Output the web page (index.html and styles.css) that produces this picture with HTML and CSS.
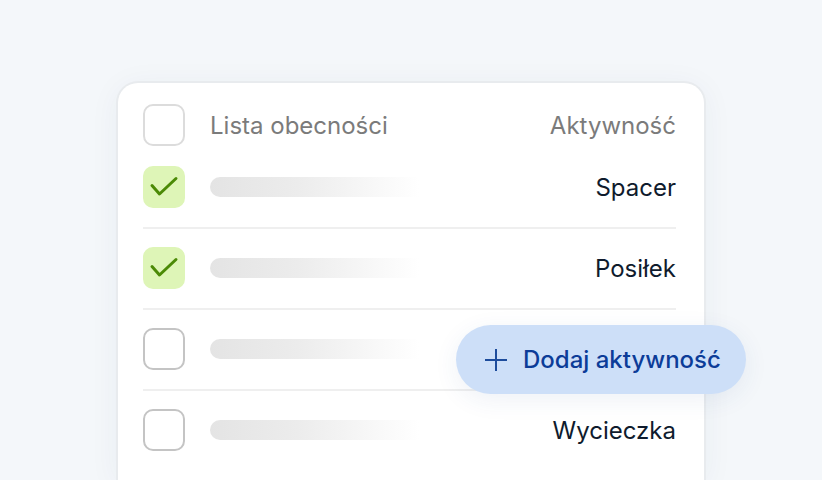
FILE: index.html
```html
<!DOCTYPE html>
<html lang="pl">
<head>
<meta charset="utf-8">
<link rel="stylesheet" href="styles.css">
</head>
<body>
<div class="stage">
  <div class="card">
    <div class="head">
      <span class="box box-light"></span>
      <span class="title">Lista obecności</span>
      <span class="act act-head">Aktywność</span>
    </div>
    <div class="row">
      <span class="box box-on"><svg viewBox="0 0 42 42" width="42" height="42"><path d="M9 19.5 L16.5 28 L33 12.5" fill="none" stroke="#4b8a06" stroke-width="3" stroke-linecap="round" stroke-linejoin="round"/></svg></span>
      <span class="skel"></span>
      <span class="act">Spacer</span>
    </div>
    <div class="row">
      <span class="box box-on"><svg viewBox="0 0 42 42" width="42" height="42"><path d="M9 19.5 L16.5 28 L33 12.5" fill="none" stroke="#4b8a06" stroke-width="3" stroke-linecap="round" stroke-linejoin="round"/></svg></span>
      <span class="skel"></span>
      <span class="act">Posiłek</span>
    </div>
    <div class="row">
      <span class="box"></span>
      <span class="skel"></span>
      <span class="act"></span>
    </div>
    <div class="row">
      <span class="box"></span>
      <span class="skel"></span>
      <span class="act">Wycieczka</span>
    </div>
  </div>
  <button class="add">
    <svg viewBox="0 0 24 24" width="24" height="24"><path d="M12 1 V23 M1 12 H23" stroke="#1d4c9c" stroke-width="2" fill="none"/></svg>
    <span>Dodaj aktywność</span>
  </button>
</div>
</body>
</html>
```
FILE: styles.css
```css
html, body {
  margin: 0;
  padding: 0;
  background: #f4f7fa;
  overflow: hidden;
  height: 480px;
}
body {
  font-family: Inter, "Noto Sans", sans-serif;
}
.stage {
  position: relative;
  padding: 81px 0 0 116px;
}
.card {
  width: 590px;
  height: 399px;
  box-sizing: border-box;
  background: #fff;
  border: 2px solid #e8ebee;
  border-bottom: none;
  border-radius: 22px 22px 0 0;
  padding: 21px 28px 0 25px;
  box-shadow: 0 4px 30px rgba(30, 60, 100, 0.05);
  overflow: hidden;
}
.head, .row {
  display: flex;
  align-items: center;
}
.head {
  height: 42px;
  padding-bottom: 2px;
}
.row {
  height: 42px;
  padding: 18px 0 19px;
  border-bottom: 2px solid #efefef;
}
.row:last-child {
  border-bottom: none;
}
.box {
  width: 42px;
  height: 42px;
  box-sizing: border-box;
  border: 2px solid #c4c4c4;
  border-radius: 10px;
  flex: none;
  display: block;
}
.box-light {
  border-color: #dcdcdc;
}
.box-on {
  border: none;
  background: #def5b7;
}
.box svg {
  display: block;
}
.title {
  margin-left: 25px;
  font-size: 24px;
  color: #7b7b7b;
}
.skel {
  margin-left: 25px;
  width: 220px;
  height: 20px;
  border-radius: 10px;
  background: linear-gradient(90deg, #e4e4e4 0%, #ececec 40%, #ffffff 95%);
}
.act {
  margin-left: auto;
  font-size: 24px;
  color: #0f1b2d;
}
.act-head {
  color: #7b7b7b;
}
.add {
  position: absolute;
  left: 456px;
  top: 325px;
  width: 290px;
  height: 69px;
  border: none;
  border-radius: 35px;
  background: #cddff8;
  display: flex;
  align-items: center;
  padding: 0 0 0 28px;
  gap: 15px;
  font-family: Inter, "Noto Sans", sans-serif;
  font-size: 24px;
  font-weight: 500;
  color: #0c3c98;
  box-shadow: 0 6px 24px rgba(40, 80, 140, 0.08);
  box-sizing: border-box;
}
.add svg {
  display: block;
  flex: none;
}
```
